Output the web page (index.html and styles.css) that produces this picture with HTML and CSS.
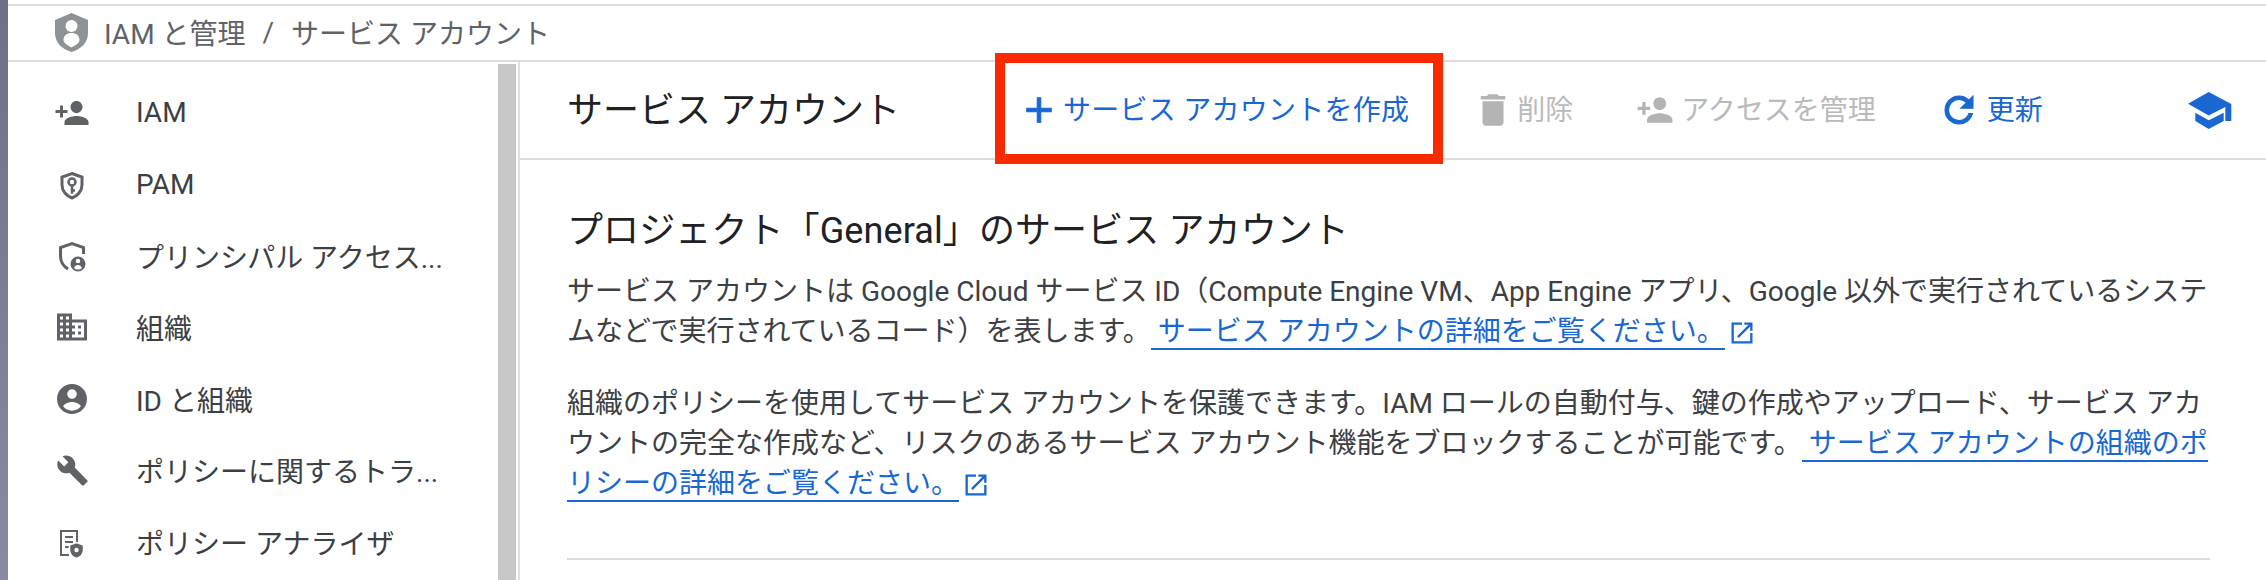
FILE: index.html
```html
<!DOCTYPE html>
<html lang="ja">
<head>
    <meta charset="UTF-8">
    <title>サービス アカウント</title>
    <link rel="stylesheet" href="styles.css">
</head>
<body>
    <div class="desktop-edge"></div>
    <div class="console">
        <header class="product-bar">
            <svg class="product-logo" viewBox="0 0 33 39"><path d="M16.500 0L33 7V20C33 30 26 36 16.500 39C7 36 0 30 0 20V7Z" fill="#909396"/><circle cx="16.500" cy="13" r="6" fill="#fff"/><path d="M8.500 27C8.500 22.500 12 20 16.500 20C21 20 24.500 22.500 24.500 27C24.500 30 20 32.500 16.500 34.500C13 32.500 8.500 30 8.500 27Z" fill="#fff"/></svg>
            <span>IAM と管理</span>
            <span class="crumb-sep">/</span>
            <span>サービス アカウント</span>
        </header>
        <div class="workspace">
            <aside class="sidebar">
                <nav class="side-nav">
                    <a class="side-item">
                        <svg class="side-icon" viewBox="0 0 24 24"><path d="M15 12c2.210 0 4-1.790 4-4s-1.790-4-4-4-4 1.790-4 4 1.790 4 4 4zm-9-2V7H4v3H1v2h3v3h2v-3h3v-2H6zm9 4c-2.670 0-8 1.340-8 4v2h16v-2c0-2.660-5.330-4-8-4z"/></svg>
                        <span>IAM</span>
                    </a>
                    <a class="side-item">
                        <svg class="side-icon" viewBox="0 0 36 36"><path class="line" stroke-width="3" d="M18 7.500L28 11V19C28 25 23.500 30 18 32C12.500 30 8 25 8 19V11Z"/><circle class="line" stroke-width="2.500" cx="18" cy="16" r="3.500"/><path class="line" stroke-width="2.500" d="M18 19.500V27.500M18 24.500H21"/></svg>
                        <span>PAM</span>
                    </a>
                    <a class="side-item">
                        <svg class="side-icon" viewBox="0 0 36 36"><path class="line" stroke-width="3" d="M14 31C9 28 6.500 23 6.500 18V9.500L18 5.500L29.500 9.500V16"/><path fill-rule="evenodd" d="M24 18.500A7.500 7.500 0 1 1 24 33.500A7.500 7.500 0 0 1 24 18.500ZM24 20.700A2.300 2.300 0 1 0 24 25.300A2.300 2.300 0 0 0 24 20.700ZM20 30C20.800 28.200 22.300 27 24 27C25.700 27 27.200 28.200 28 30C27 31 25.600 31.600 24 31.600C22.400 31.600 21 31 20 30Z"/></svg>
                        <span>プリンシパル アクセス...</span>
                    </a>
                    <a class="side-item">
                        <svg class="side-icon" viewBox="0 0 24 24"><path d="M12 7V3H2v18h20V7H12zM6 19H4v-2h2v2zm0-4H4v-2h2v2zm0-4H4V9h2v2zm0-4H4V5h2v2zm4 12H8v-2h2v2zm0-4H8v-2h2v2zm0-4H8V9h2v2zm0-4H8V5h2v2zm10 12h-8v-2h2v-2h-2v-2h2v-2h-2V9h8v10zm-2-8h-2v2h2v-2zm0 4h-2v2h2v-2z"/></svg>
                        <span>組織</span>
                    </a>
                    <a class="side-item">
                        <svg class="side-icon" viewBox="0 0 24 24"><path fill-rule="evenodd" d="M12 2C6.480 2 2 6.480 2 12s4.480 10 10 10 10-4.480 10-10S17.520 2 12 2zm0 3.500a3.200 3.200 0 1 1 0 6.400 3.200 3.200 0 0 1 0-6.400zm0 14.300c-2.500 0-4.700-1.200-6-3.100 1.500-1.900 3.700-2.700 6-2.700s4.500.8 6 2.700c-1.300 1.900-3.500 3.100-6 3.100z"/></svg>
                        <span>ID と組織</span>
                    </a>
                    <a class="side-item">
                        <svg class="side-icon wrench" viewBox="0 0 24 24"><path d="M22.700 19l-9.100-9.100c.9-2.300.4-5-1.500-6.900-2-2-5-2.400-7.400-1.300L9 6 6 9 1.600 4.700C.4 7.100.9 10.100 2.900 12.100c1.900 1.900 4.600 2.400 6.900 1.500l9.100 9.100c.4.4 1 .4 1.400 0l2.300-2.300c.5-.4.5-1.100.1-1.400z"/></svg>
                        <span>ポリシーに関するトラ...</span>
                    </a>
                    <a class="side-item">
                        <svg class="side-icon" viewBox="0 0 36 36"><path class="line" stroke-width="2" d="M15 31H7V7H23V20"/><path class="line" stroke-width="2" d="M11 13H19M11 18H19M11 23H15"/><path stroke="#fff" stroke-width="1.500" d="M22.500 18.500L29.500 21V26C29.500 30 26.500 33 22.500 34.500C18.500 33 15.500 30 15.500 26V21Z"/><circle cx="22.500" cy="26" r="2.200" fill="#fff"/></svg>
                        <span>ポリシー アナライザ</span>
                    </a>
                </nav>
                <div class="side-scrollbar"></div>
            </aside>
            <main class="content">
                <div class="toolbar">
                    <h1 class="page-title">サービス アカウント</h1>
                    <button class="tool-btn create-btn">
                        <svg class="tool-icon bold" viewBox="0 0 24 24"><path d="M19 13h-6v6h-2v-6H5v-2h6V5h2v6h6v2z"/></svg>
                        <span class="tool-label">サービス アカウントを作成</span>
                        <span class="annotation"></span>
                    </button>
                    <button class="tool-btn delete-btn" disabled>
                        <svg class="tool-icon" viewBox="0 0 24 24"><path d="M6 19c0 1.100.9 2 2 2h8c1.100 0 2-.9 2-2V7H6v12zM19 4h-3.500l-1-1h-5l-1 1H5v2h14V4z"/></svg>
                        <span class="tool-label">削除</span>
                    </button>
                    <button class="tool-btn access-btn" disabled>
                        <svg class="tool-icon small" viewBox="0 0 24 24"><path d="M15 12c2.210 0 4-1.790 4-4s-1.790-4-4-4-4 1.790-4 4 1.790 4 4 4zm-9-2V7H4v3H1v2h3v3h2v-3h3v-2H6zm9 4c-2.670 0-8 1.340-8 4v2h16v-2c0-2.660-5.330-4-8-4z"/></svg>
                        <span class="tool-label">アクセスを管理</span>
                    </button>
                    <button class="tool-btn refresh-btn">
                        <svg class="tool-icon bold" viewBox="0 0 24 24"><path d="M17.650 6.350C16.200 4.900 14.210 4 12 4c-4.420 0-7.990 3.580-7.990 8s3.570 8 7.990 8c3.730 0 6.840-2.550 7.730-6h-2.080c-.82 2.330-3.040 4-5.650 4-3.310 0-6-2.690-6-6s2.690-6 6-6c1.660 0 3.140.69 4.220 1.780L13 11h7V4l-2.350 2.350z"/></svg>
                        <span class="tool-label">更新</span>
                    </button>
                    <svg class="learn-icon" viewBox="0 0 44 37"><path d="M20.700 0L43.300 12V29H37.300V15L20.700 23.500L0 11.700Z"/><path d="M7.300 20.700L20.700 28.300L35.700 20.700V29L20.700 37L7.300 29Z"/></svg>
                </div>
                <section class="intro">
                    <h2>プロジェクト「General」のサービス アカウント</h2>
                    <p>サービス アカウントは Google Cloud サービス ID（Compute Engine VM、App Engine アプリ、Google 以外で実行されているシステムなどで実行されているコード）を表します。<a class="doc-link"> サービス アカウントの詳細をご覧ください。</a><svg class="ext-icon" viewBox="0 0 24 24"><path d="M19 19H5V5h7V3H3v18h18v-9h-2v7zM14 3v2h3.590l-9.830 9.830 1.410 1.410L19 6.410V10h2V3h-7z"/></svg></p>
                    <p>組織のポリシーを使用してサービス アカウントを保護できます。IAM ロールの自動付与、鍵の作成やアップロード、サービス アカウントの完全な作成など、リスクのあるサービス アカウント機能をブロックすることが可能です。<a class="doc-link"> サービス アカウントの組織のポリシーの詳細をご覧ください。</a><svg class="ext-icon" viewBox="0 0 24 24"><path d="M19 19H5V5h7V3H3v18h18v-9h-2v7zM14 3v2h3.590l-9.830 9.830 1.410 1.410L19 6.410V10h2V3h-7z"/></svg></p>
                    <hr class="divider">
                </section>
            </main>
        </div>
    </div>
</body>
</html>
```
FILE: styles.css
```css
html, body {
    height: 580px;
    margin: 0;
    overflow: hidden;
}
body {
    display: flex;
    background-color: white;
    color: #202124;
    font-family: Roboto, "Noto Sans CJK JP", sans-serif;
    font-size: 28px;
}
.desktop-edge {
    width: 8px;
    flex: none;
    background: linear-gradient(#6f6f88, #8a8aa2);
}
.console {
    flex: 1;
    min-width: 0;
}
.product-bar {
    display: flex;
    align-items: center;
    height: 52px;
    margin-top: 4px;
    padding: 0 0 2px 47px;
    border-top: 2px solid #dcdcdc;
    border-bottom: 2px solid #dcdcdc;
    color: #5f6368;
    font-size: 28px;
}
.product-logo {
    width: 33px;
    height: 39px;
    margin-right: 16px;
}
.crumb-sep {
    margin: 0 17px;
}
.workspace {
    display: flex;
}
.sidebar {
    display: flex;
    width: 510px;
    flex: none;
}
.side-nav {
    flex: 1;
    padding-top: 15px;
}
.side-item {
    display: flex;
    align-items: center;
    height: 71.5px;
    padding-left: 46px;
    color: #3c4043;
}
.side-icon {
    width: 36px;
    height: 36px;
    margin-right: 46px;
    fill: #5f6368;
}
.side-icon.wrench {
    width: 33px;
    height: 33px;
    margin: 0 47px 0 2px;
}
.line {
    fill: none;
    stroke: #5f6368;
}
.side-scrollbar {
    width: 18px;
    height: 520px;
    margin: 2px 2px 0 0;
    background-color: #c8c8c8;
}
.content {
    flex: 1;
    min-width: 0;
    border-left: 2px solid #e0e0e0;
}
.toolbar {
    display: flex;
    align-items: center;
    height: 96px;
    padding: 0 34px 0 47px;
    border-bottom: 2px solid #dcdcdc;
}
.page-title {
    margin: 0 118px 0 0;
    padding-bottom: 6px;
    font-size: 36px;
    font-weight: 400;
}
.tool-btn {
    display: flex;
    align-items: center;
    position: relative;
    gap: 6px;
    padding: 0;
    border: none;
    background: none;
    color: #1967d2;
    font: inherit;
    white-space: nowrap;
}
.tool-label {
    padding-bottom: 4px;
}
.tool-icon {
    width: 42px;
    height: 42px;
    fill: #1967d2;
}
.tool-icon.bold path {
    stroke: #1967d2;
    stroke-width: 0.6;
}
.tool-icon.small {
    width: 38px;
    height: 38px;
}
.tool-btn:disabled {
    color: #bababa;
}
.tool-btn:disabled .tool-icon {
    fill: #b4b4b4;
}
.create-btn {
    gap: 3px;
    letter-spacing: 0.25px;
}
.delete-btn {
    margin-left: 63px;
    gap: 3px;
}
.access-btn {
    margin-left: 63px;
    gap: 7px;
}
.refresh-btn {
    margin-left: 62px;
    gap: 7px;
}
/* red box drawn over the screenshot */
.annotation {
    position: absolute;
    top: -35px;
    bottom: -32px;
    left: -23px;
    right: -34px;
    border: 10px solid #fa2a00;
}
.learn-icon {
    width: 44px;
    height: 37px;
    margin-left: auto;
    fill: #1967d2;
}
.intro {
    padding: 50px 56px 0 47px;
}
.intro h2 {
    margin: 0 0 20px;
    font-size: 36px;
    font-weight: 400;
    letter-spacing: 0.1px;
    line-height: 42px;
}
.intro p {
    margin: 0 0 32px;
    color: #3c4043;
    line-height: 40px;
}
.doc-link {
    border-bottom: 2px solid #1967d2;
    color: #1967d2;
}
.ext-icon {
    width: 28px;
    height: 28px;
    margin-left: 3px;
    vertical-align: -6px;
    fill: #1967d2;
}
.divider {
    height: 2px;
    margin: 54px 0 0;
    border: none;
    background-color: #dcdcdc;
}
```
